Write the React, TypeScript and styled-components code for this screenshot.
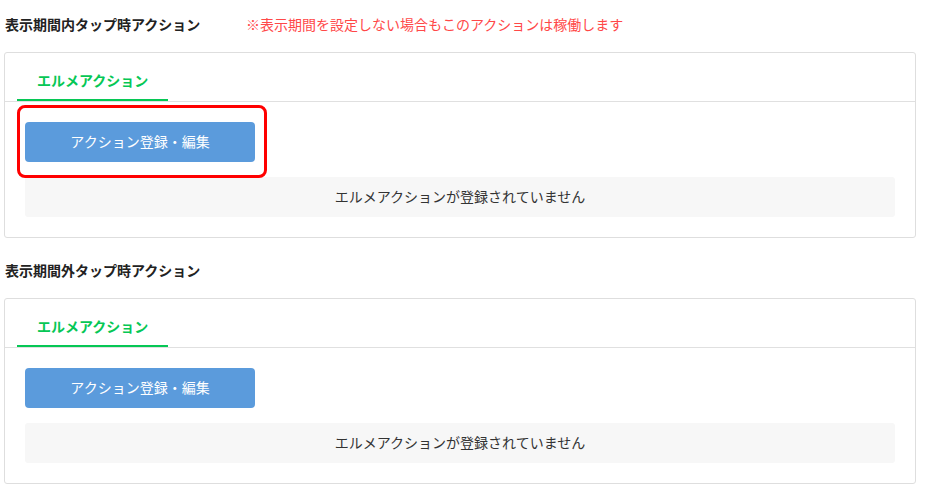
import React, { FC } from "react"
import styled, { createGlobalStyle } from "styled-components"

const GlobalStyle = createGlobalStyle`
  html, body {
    margin: 0;
    padding: 0;
    background: #fff;
  }
  body {
    font-family: "Noto Sans CJK JP", "Noto Sans", sans-serif;
    color: #333;
  }
`

interface ISection {
  title: string
  note?: string
  highlight?: boolean
}

const ActionSection: FC<ISection> = ({ title, note, highlight }) => (
  <Section>
    <TitleRow>
      <Title>{title}</Title>
      {note && <Note>{note}</Note>}
    </TitleRow>
    <Card>
      <TabBar>
        <Tab>エルメアクション</Tab>
      </TabBar>
      <Body>
        <ButtonWrap>
          <EditButton>アクション登録・編集</EditButton>
          {highlight && <Highlight />}
        </ButtonWrap>
        <Empty>エルメアクションが登録されていません</Empty>
      </Body>
    </Card>
  </Section>
)

export default function App() {
  return (
    <>
      <GlobalStyle />
      <Page>
        <ActionSection
          title="表示期間内タップ時アクション"
          note="※表示期間を設定しない場合もこのアクションは稼働します"
          highlight
        />
        <ActionSection title="表示期間外タップ時アクション" />
      </Page>
    </>
  )
}

//---------------------------STYLES-------------------------------------------//

const Page = styled.div`
  padding: 14px 0 0 4px;
`

const Section = styled.section`
  margin-bottom: 22px;
`

const TitleRow = styled.div`
  display: flex;
  align-items: center;
  height: 20px;
  margin-bottom: 18px;
  padding-left: 1px;
`

const Title = styled.h3`
  margin: 0;
  width: 241px;
  font-size: 14px;
  line-height: 20px;
  font-weight: bold;
  color: #222;
`

const Note = styled.span`
  font-size: 14px;
  line-height: 20px;
  color: #ff4848;
`

const Card = styled.div`
  box-sizing: border-box;
  width: 912px;
  border: 1px solid #dedede;
  border-radius: 3px;
  background: #fff;
`

const TabBar = styled.div`
  display: flex;
  padding-left: 12px;
  border-bottom: 1px solid #e0e0e0;
`

const Tab = styled.div`
  padding: 17px 20px 9px;
  font-size: 14px;
  line-height: 20px;
  font-weight: bold;
  color: #06c755;
  border-bottom: 2px solid #06c755;
`

const Body = styled.div`
  padding: 20px;
`

const ButtonWrap = styled.div`
  position: relative;
  width: 230px;
`

const EditButton = styled.button`
  display: block;
  width: 230px;
  height: 40px;
  padding: 0 0 2px;
  border: none;
  border-radius: 4px;
  background: #5b9bdc;
  color: #fff;
  font-family: inherit;
  font-size: 14px;
  cursor: pointer;
`

const Highlight = styled.div`
  position: absolute;
  left: -8px;
  top: -17px;
  right: -12px;
  bottom: -16px;
  border: 3px solid #f00;
  border-radius: 8px;
  pointer-events: none;
`

const Empty = styled.div`
  margin-top: 15px;
  height: 40px;
  padding-bottom: 3px;
  box-sizing: border-box;
  display: flex;
  align-items: center;
  justify-content: center;
  background: #f7f7f7;
  border-radius: 3px;
  font-size: 14px;
  color: #333;
`
